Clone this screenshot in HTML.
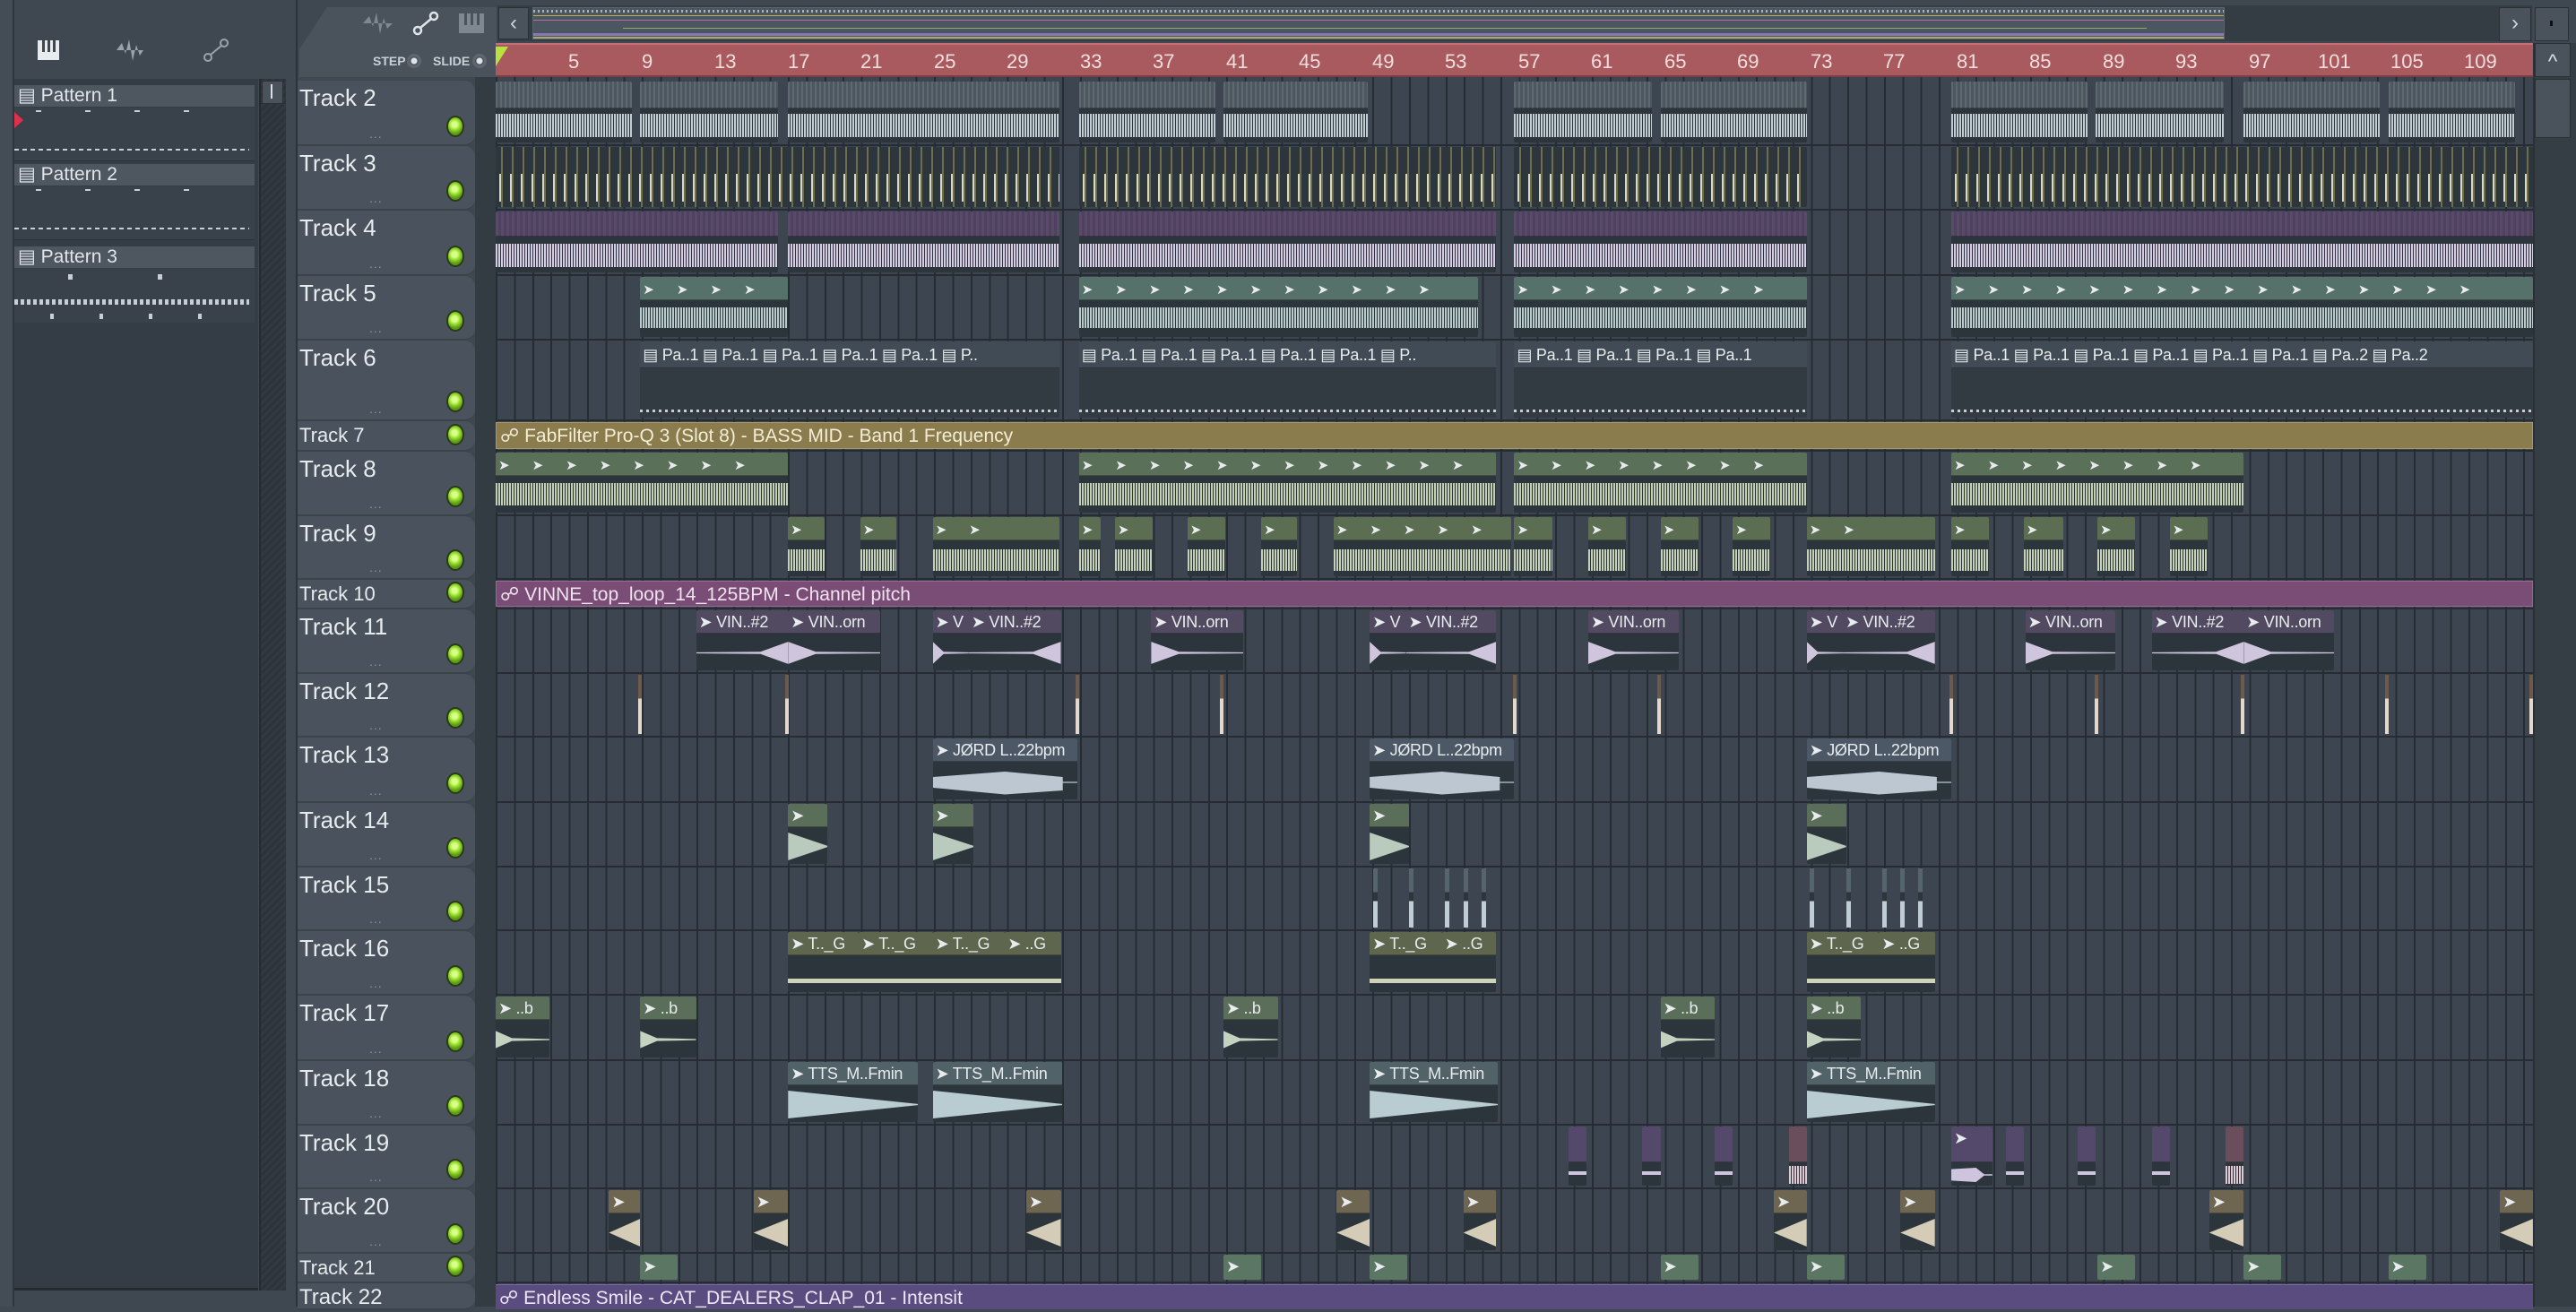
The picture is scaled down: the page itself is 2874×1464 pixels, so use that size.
<!DOCTYPE html>
<html><head><meta charset="utf-8">
<style>
*{box-sizing:border-box;margin:0;padding:0}
body{width:2874px;height:1458px;overflow:hidden;background:#3f4850;font-family:"Liberation Sans Narrow","Liberation Sans",sans-serif;position:relative;color:#dfe5ea}
.abs{position:absolute}
#grid{position:absolute;left:553px;top:86px;width:2273px;height:1372px;background-color:#3d4650;background-image:repeating-linear-gradient(90deg,#252c33 0 2px,transparent 2px 20.38px)}
.r{position:absolute;left:553px;width:2273px;border-bottom:2px solid #252c33}
.th{position:absolute;left:332px;width:198px;background:#4a535d;border-radius:0 12px 12px 0;border-bottom:2px solid #3a424a}
.th b{position:absolute;left:2px;top:4px;font-weight:normal;font-size:26px;color:#e6ebee}
.th i{position:absolute;left:80px;bottom:4px;font-style:normal;font-size:14px;color:#8a939c;letter-spacing:1px}
.th s{position:absolute;right:12px;bottom:8px;width:20px;height:24px;border-radius:50%;background:radial-gradient(circle at 45% 40%,#d8ff8a 0 3px,#96dc2c 6px,#5d9a16 10px);border:2px solid #2a3a1a}
.c{position:absolute;top:1px;bottom:2px;left:calc((var(--a) - 302)*1.833px);width:calc((var(--b) - var(--a))*1.833px);background:#2d353c;overflow:hidden;border-radius:2px}
.h{height:26px;background:var(--hc);font-size:18px;letter-spacing:-0.3px;line-height:26px;white-space:nowrap;padding-left:3px;color:#e8ecee;overflow:hidden;border-bottom:1px solid rgba(0,0,0,.3)}
.w{position:absolute;left:0;right:0;top:36px;bottom:6px;background:repeating-linear-gradient(90deg,var(--wc) 0 2px,transparent 2px 3px)}
.ws{position:absolute;left:0;right:0;top:32px;bottom:4px;background:var(--wc)}
.ar{font-size:15px;letter-spacing:25px}
.auto{position:absolute;left:0;right:0;top:1px;bottom:1px;font-size:21px;line-height:30px;padding-left:4px;white-space:nowrap}
.tk{position:absolute;top:1px;bottom:2px;width:4px;left:calc((var(--a) - 302)*1.833px)}
.rn{position:absolute;top:56px;font-size:22px;color:#f3dede}
</style></head><body>

<div class="abs" style="left:0;top:0;width:16px;height:1458px;background:#444d56;border-right:2px solid #2f363d"></div>
<div class="abs" style="left:18px;top:0;width:312px;height:88px;background:#3f4850"></div>
<svg class="abs" style="left:36px;top:42px" width="240" height="30" viewBox="0 0 240 30">
 <rect x="6" y="3" width="24" height="22" fill="#e8ecef"/><rect x="11" y="3" width="3" height="13" fill="#3f4850"/><rect x="17" y="3" width="3" height="13" fill="#3f4850"/><rect x="23" y="3" width="3" height="13" fill="#3f4850"/>
 <path d="M94 14 L100 6 L104 18 L108 2 L112 26 L116 8 L120 20 L124 14 Z" fill="#9aa3ab"/>
 <circle cx="196" cy="22" r="4" fill="none" stroke="#9aa3ab" stroke-width="2"/><circle cx="214" cy="6" r="4" fill="none" stroke="#9aa3ab" stroke-width="2"/><line x1="199" y1="19" x2="211" y2="9" stroke="#9aa3ab" stroke-width="2"/>
</svg>
<div class="abs" style="left:16px;top:88px;width:272px;height:1352px;background:#343d46;border-bottom:3px solid #252b31"></div>
<div class="abs" style="left:289px;top:88px;width:30px;height:1352px;background:repeating-linear-gradient(135deg,#2c333a 0 3px,#323a41 3px 6px);border-left:2px solid #252b31"></div>
<div class="abs" style="left:292px;top:90px;width:24px;height:26px;background:#4a535c;border:1px solid #2a3036"></div>
<div class="abs" style="left:302px;top:94px;width:2px;height:16px;background:#dde"></div>

<div class="abs" style="left:16px;top:95px;width:268px;height:24px;background:#4e5760;font-size:21px;line-height:24px;padding-left:4px">▤ Pattern 1</div>
<div class="abs" style="left:16px;top:120px;width:268px;height:60px;background:#39424b;border-bottom:1px solid #2b3238">
 <div class="abs" style="left:24px;top:3px;width:220px;height:2px;background:repeating-linear-gradient(90deg,#c8ced3 0 6px,transparent 6px 55px)"></div>
 <div class="abs" style="left:0;top:46px;width:262px;height:2px;background:repeating-linear-gradient(90deg,#c8ced3 0 5px,transparent 5px 9px)"></div>
</div>
<div class="abs" style="left:16px;top:125px;width:0;height:0;border-top:9px solid transparent;border-bottom:9px solid transparent;border-left:10px solid #e0304a"></div>
<div class="abs" style="left:16px;top:183px;width:268px;height:24px;background:#4e5760;font-size:21px;line-height:24px;padding-left:4px">▤ Pattern 2</div>
<div class="abs" style="left:16px;top:208px;width:268px;height:60px;background:#39424b;border-bottom:1px solid #2b3238">
 <div class="abs" style="left:24px;top:3px;width:220px;height:2px;background:repeating-linear-gradient(90deg,#c8ced3 0 6px,transparent 6px 55px)"></div>
 <div class="abs" style="left:0;top:46px;width:262px;height:2px;background:repeating-linear-gradient(90deg,#c8ced3 0 5px,transparent 5px 9px)"></div>
</div>
<div class="abs" style="left:16px;top:275px;width:268px;height:24px;background:#4e5760;font-size:21px;line-height:24px;padding-left:4px">▤ Pattern 3</div>
<div class="abs" style="left:16px;top:300px;width:268px;height:60px;background:#39424b">
 <div class="abs" style="left:60px;top:6px;width:200px;height:6px;background:repeating-linear-gradient(90deg,#c8ced3 0 5px,transparent 5px 100px)"></div>
 <div class="abs" style="left:0;top:34px;width:262px;height:6px;background:repeating-linear-gradient(90deg,#c8ced3 0 4px,transparent 4px 7px)"></div>
 <div class="abs" style="left:40px;top:50px;width:220px;height:6px;background:repeating-linear-gradient(90deg,#c8ced3 0 4px,transparent 4px 55px)"></div>
</div>

<div class="abs" style="left:330px;top:0;width:2px;height:1458px;background:#2b3238"></div>
<div class="abs" style="left:334px;top:8px;width:220px;height:78px;background:#4a535c;clip-path:polygon(14% 0,100% 0,100% 100%,0 100%,0 60%)"></div>
<svg class="abs" style="left:400px;top:12px" width="150" height="30" viewBox="0 0 150 30">
 <path d="M5 14 L12 6 L16 18 L20 2 L24 26 L28 8 L32 20 L38 14 Z" fill="#7f8890"/>
 <circle cx="66" cy="22" r="4" fill="none" stroke="#dfe4e8" stroke-width="2.5"/><circle cx="84" cy="6" r="4" fill="none" stroke="#dfe4e8" stroke-width="2.5"/><line x1="69" y1="19" x2="81" y2="9" stroke="#dfe4e8" stroke-width="2.5"/>
 <rect x="112" y="3" width="28" height="22" fill="#7f8890"/><rect x="118" y="3" width="3" height="13" fill="#4a535c"/><rect x="125" y="3" width="3" height="13" fill="#4a535c"/><rect x="132" y="3" width="3" height="13" fill="#4a535c"/>
</svg>
<div class="abs" style="left:416px;top:60px;font-size:14px;color:#c8d0d6;font-family:'Liberation Sans',sans-serif;font-weight:bold">STEP</div>
<div class="abs" style="left:454px;top:60px;width:16px;height:16px;border-radius:50%;border:3px solid #5e676f;background:radial-gradient(circle,#dfe4e8 0 3px,#4a535c 4px)"></div>
<div class="abs" style="left:483px;top:60px;font-size:14px;color:#c8d0d6;font-family:'Liberation Sans',sans-serif;font-weight:bold">SLIDE</div>
<div class="abs" style="left:527px;top:60px;width:16px;height:16px;border-radius:50%;border:3px solid #5e676f;background:radial-gradient(circle,#dfe4e8 0 3px,#4a535c 4px)"></div>

<div class="abs" style="left:555px;top:6px;width:2270px;height:40px;background:#343c44"></div>
<div class="abs" style="left:556px;top:8px;width:34px;height:36px;background:#4a535c;border:1px solid #2a3036;font-size:24px;text-align:center;line-height:34px;color:#cfd5da">‹</div>
<div class="abs" style="left:594px;top:8px;width:1888px;height:36px;background:#4b5660;border:1px solid #5a646d">
 <div class="abs" style="left:0;top:2px;width:100%;height:3px;background:repeating-linear-gradient(90deg,#aab3ba 0 2px,transparent 2px 5px)"></div>
 <div class="abs" style="left:0;top:8px;width:100%;height:1px;background:#b8b060"></div>
 <div class="abs" style="left:0;top:13px;width:100%;height:1px;background:#b070a0"></div>
 <div class="abs" style="left:100px;top:22px;width:1700px;height:1px;background:#9aa870"></div>
 <div class="abs" style="left:0;top:28px;width:100%;height:3px;background:#8a78b0"></div>
 <div class="abs" style="left:0;top:32px;width:100%;height:2px;background:#a8a870"></div>
</div>
<div class="abs" style="left:2788px;top:8px;width:36px;height:38px;background:#4a535c;border:1px solid #2a3036;font-size:24px;text-align:center;line-height:34px;color:#cfd5da">›</div>
<div class="abs" style="left:2828px;top:8px;width:38px;height:38px;background:#4a535c;border:1px solid #2a3036"></div>
<div class="abs" style="left:2845px;top:23px;width:3px;height:6px;background:#111"></div>

<div class="abs" style="left:553px;top:48px;width:2273px;height:38px;background:#a85a5f;border-top:2px solid #c47076;border-bottom:2px solid #7c3e44"></div>
<div class="abs" style="left:553px;top:52px;width:0;height:0;border-left:14px solid #b7e040;border-bottom:22px solid transparent"></div>
<div class="rn" style="left:634px">5</div>
<div class="rn" style="left:716px">9</div>
<div class="rn" style="left:797px">13</div>
<div class="rn" style="left:879px">17</div>
<div class="rn" style="left:960px">21</div>
<div class="rn" style="left:1042px">25</div>
<div class="rn" style="left:1123px">29</div>
<div class="rn" style="left:1205px">33</div>
<div class="rn" style="left:1286px">37</div>
<div class="rn" style="left:1368px">41</div>
<div class="rn" style="left:1449px">45</div>
<div class="rn" style="left:1531px">49</div>
<div class="rn" style="left:1612px">53</div>
<div class="rn" style="left:1694px">57</div>
<div class="rn" style="left:1775px">61</div>
<div class="rn" style="left:1857px">65</div>
<div class="rn" style="left:1938px">69</div>
<div class="rn" style="left:2020px">73</div>
<div class="rn" style="left:2101px">77</div>
<div class="rn" style="left:2183px">81</div>
<div class="rn" style="left:2264px">85</div>
<div class="rn" style="left:2346px">89</div>
<div class="rn" style="left:2427px">93</div>
<div class="rn" style="left:2509px">97</div>
<div class="rn" style="left:2586px">101</div>
<div class="rn" style="left:2667px">105</div>
<div class="rn" style="left:2749px">109</div>

<div class="abs" style="left:2826px;top:48px;width:48px;height:1410px;background:#353d45;border-left:2px solid #2a3036"></div>
<div class="abs" style="left:2828px;top:48px;width:40px;height:38px;background:#4a535c;border:1px solid #2a3036;font-size:22px;text-align:center;line-height:40px;color:#dfe4e8">^</div>
<div class="abs" style="left:2828px;top:88px;width:40px;height:66px;background:#4a535c;border:1px solid #2a3036"></div>

<div class="abs" style="left:530px;top:86px;width:23px;height:1372px;background:#333b43"></div>

<div id="grid"></div>

<div class="th" style="top:90px;height:73px"><b>Track 2</b><i>...</i><s></s></div>
<div class="th" style="top:163px;height:72px"><b>Track 3</b><i>...</i><s></s></div>
<div class="th" style="top:235px;height:73px"><b>Track 4</b><i>...</i><s></s></div>
<div class="th" style="top:308px;height:72px"><b>Track 5</b><i>...</i><s></s></div>
<div class="th" style="top:380px;height:90px"><b>Track 6</b><i>...</i><s></s></div>
<div class="th" style="top:470px;height:34px"><b style="font-size:22px;top:3px">Track 7</b><s style="bottom:5px"></s></div>
<div class="th" style="top:504px;height:72px"><b>Track 8</b><i>...</i><s></s></div>
<div class="th" style="top:576px;height:71px"><b>Track 9</b><i>...</i><s></s></div>
<div class="th" style="top:647px;height:33px"><b style="font-size:22px;top:3px">Track 10</b><s style="bottom:5px"></s></div>
<div class="th" style="top:680px;height:72px"><b>Track 11</b><i>...</i><s></s></div>
<div class="th" style="top:752px;height:71px"><b>Track 12</b><i>...</i><s></s></div>
<div class="th" style="top:823px;height:73px"><b>Track 13</b><i>...</i><s></s></div>
<div class="th" style="top:896px;height:72px"><b>Track 14</b><i>...</i><s></s></div>
<div class="th" style="top:968px;height:71px"><b>Track 15</b><i>...</i><s></s></div>
<div class="th" style="top:1039px;height:72px"><b>Track 16</b><i>...</i><s></s></div>
<div class="th" style="top:1111px;height:73px"><b>Track 17</b><i>...</i><s></s></div>
<div class="th" style="top:1184px;height:72px"><b>Track 18</b><i>...</i><s></s></div>
<div class="th" style="top:1256px;height:71px"><b>Track 19</b><i>...</i><s></s></div>
<div class="th" style="top:1327px;height:72px"><b>Track 20</b><i>...</i><s></s></div>
<div class="th" style="top:1399px;height:33px"><b style="font-size:22px;top:3px">Track 21</b><s style="bottom:5px"></s></div>
<div class="th" style="top:1432px;height:30px"><b style="font-size:24px;top:2px">Track 22</b></div>

<div class="r" style="top:90px;height:73px;--hc:#4f5b63;--wc:#c2ccd3">
<div class="c" style="--a:302;--b:385"><div class="h" style="height:30px;background:repeating-linear-gradient(90deg,#5d6870 0 2px,#4c575f 2px 5px)"></div><div class="w"></div></div>
<div class="c" style="--a:390;--b:474"><div class="h" style="height:30px;background:repeating-linear-gradient(90deg,#5d6870 0 2px,#4c575f 2px 5px)"></div><div class="w"></div></div>
<div class="c" style="--a:480;--b:645"><div class="h" style="height:30px;background:repeating-linear-gradient(90deg,#5d6870 0 2px,#4c575f 2px 5px)"></div><div class="w"></div></div>
<div class="c" style="--a:657;--b:740"><div class="h" style="height:30px;background:repeating-linear-gradient(90deg,#5d6870 0 2px,#4c575f 2px 5px)"></div><div class="w"></div></div>
<div class="c" style="--a:745;--b:833"><div class="h" style="height:30px;background:repeating-linear-gradient(90deg,#5d6870 0 2px,#4c575f 2px 5px)"></div><div class="w"></div></div>
<div class="c" style="--a:922;--b:1006"><div class="h" style="height:30px;background:repeating-linear-gradient(90deg,#5d6870 0 2px,#4c575f 2px 5px)"></div><div class="w"></div></div>
<div class="c" style="--a:1011;--b:1100"><div class="h" style="height:30px;background:repeating-linear-gradient(90deg,#5d6870 0 2px,#4c575f 2px 5px)"></div><div class="w"></div></div>
<div class="c" style="--a:1188;--b:1271"><div class="h" style="height:30px;background:repeating-linear-gradient(90deg,#5d6870 0 2px,#4c575f 2px 5px)"></div><div class="w"></div></div>
<div class="c" style="--a:1276;--b:1354"><div class="h" style="height:30px;background:repeating-linear-gradient(90deg,#5d6870 0 2px,#4c575f 2px 5px)"></div><div class="w"></div></div>
<div class="c" style="--a:1366;--b:1449"><div class="h" style="height:30px;background:repeating-linear-gradient(90deg,#5d6870 0 2px,#4c575f 2px 5px)"></div><div class="w"></div></div>
<div class="c" style="--a:1454;--b:1531"><div class="h" style="height:30px;background:repeating-linear-gradient(90deg,#5d6870 0 2px,#4c575f 2px 5px)"></div><div class="w"></div></div>
</div>
<div class="r" style="top:163px;height:72px">
<div class="c" style="--a:302;--b:645;background:repeating-linear-gradient(90deg,#2e363d 0 6px,#6e6e4c 6px 8px,#2e363d 8px 12px)"><div class="w" style="top:30px;background:repeating-linear-gradient(90deg,transparent 0 4px,#d8dac0 4px 6px,transparent 6px 12px)"></div></div>
<div class="c" style="--a:657;--b:911;background:repeating-linear-gradient(90deg,#2e363d 0 6px,#6e6e4c 6px 8px,#2e363d 8px 12px)"><div class="w" style="top:30px;background:repeating-linear-gradient(90deg,transparent 0 4px,#d8dac0 4px 6px,transparent 6px 12px)"></div></div>
<div class="c" style="--a:922;--b:1100;background:repeating-linear-gradient(90deg,#2e363d 0 6px,#6e6e4c 6px 8px,#2e363d 8px 12px)"><div class="w" style="top:30px;background:repeating-linear-gradient(90deg,transparent 0 4px,#d8dac0 4px 6px,transparent 6px 12px)"></div></div>
<div class="c" style="--a:1188;--b:1542;background:repeating-linear-gradient(90deg,#2e363d 0 6px,#6e6e4c 6px 8px,#2e363d 8px 12px)"><div class="w" style="top:30px;background:repeating-linear-gradient(90deg,transparent 0 4px,#d8dac0 4px 6px,transparent 6px 12px)"></div></div>
</div>
<div class="r" style="top:235px;height:73px;--wc:#d6cde4">
<div class="c" style="--a:302;--b:474"><div class="h" style="height:28px;background:repeating-linear-gradient(90deg,#5a4a68 0 3px,#4e4260 3px 6px)"></div><div class="w"></div></div>
<div class="c" style="--a:480;--b:645"><div class="h" style="height:28px;background:repeating-linear-gradient(90deg,#5a4a68 0 3px,#4e4260 3px 6px)"></div><div class="w"></div></div>
<div class="c" style="--a:657;--b:911"><div class="h" style="height:28px;background:repeating-linear-gradient(90deg,#5a4a68 0 3px,#4e4260 3px 6px)"></div><div class="w"></div></div>
<div class="c" style="--a:922;--b:1100"><div class="h" style="height:28px;background:repeating-linear-gradient(90deg,#5a4a68 0 3px,#4e4260 3px 6px)"></div><div class="w"></div></div>
<div class="c" style="--a:1188;--b:1542"><div class="h" style="height:28px;background:repeating-linear-gradient(90deg,#5a4a68 0 3px,#4e4260 3px 6px)"></div><div class="w"></div></div>
</div>
<div class="r" style="top:308px;height:72px;--hc:#56706a;--wc:#b9cacb">
<div class="c" style="--a:390;--b:480"><div class="h"><span class="ar">➤➤➤➤</span></div><div class="w" style="top:34px;bottom:10px"></div></div>
<div class="c" style="--a:657;--b:900"><div class="h"><span class="ar">➤➤➤➤➤➤➤➤➤➤➤</span></div><div class="w" style="top:34px;bottom:10px"></div></div>
<div class="c" style="--a:922;--b:1100"><div class="h"><span class="ar">➤➤➤➤➤➤➤➤</span></div><div class="w" style="top:34px;bottom:10px"></div></div>
<div class="c" style="--a:1188;--b:1542"><div class="h"><span class="ar">➤➤➤➤➤➤➤➤➤➤➤➤➤➤➤➤</span></div><div class="w" style="top:34px;bottom:10px"></div></div>
</div>
<div class="r" style="top:380px;height:90px;--hc:#414b55">
<div class="c" style="--a:390;--b:645;background:#323a42"><div class="h" style="height:30px;line-height:30px">▤ Pa..1 ▤ Pa..1 ▤ Pa..1 ▤ Pa..1 ▤ Pa..1 ▤ P..</div><div class="abs" style="left:0;right:0;bottom:6px;height:3px;background:repeating-linear-gradient(90deg,#c8ced3 0 3px,transparent 3px 7px)"></div></div>
<div class="c" style="--a:657;--b:911;background:#323a42"><div class="h" style="height:30px;line-height:30px">▤ Pa..1 ▤ Pa..1 ▤ Pa..1 ▤ Pa..1 ▤ Pa..1 ▤ P..</div><div class="abs" style="left:0;right:0;bottom:6px;height:3px;background:repeating-linear-gradient(90deg,#c8ced3 0 3px,transparent 3px 7px)"></div></div>
<div class="c" style="--a:922;--b:1100;background:#323a42"><div class="h" style="height:30px;line-height:30px">▤ Pa..1 ▤ Pa..1 ▤ Pa..1 ▤ Pa..1</div><div class="abs" style="left:0;right:0;bottom:6px;height:3px;background:repeating-linear-gradient(90deg,#c8ced3 0 3px,transparent 3px 7px)"></div></div>
<div class="c" style="--a:1188;--b:1542;background:#323a42"><div class="h" style="height:30px;line-height:30px">▤ Pa..1 ▤ Pa..1 ▤ Pa..1 ▤ Pa..1 ▤ Pa..1 ▤ Pa..1 ▤ Pa..2 ▤ Pa..2</div><div class="abs" style="left:0;right:0;bottom:6px;height:3px;background:repeating-linear-gradient(90deg,#c8ced3 0 3px,transparent 3px 7px)"></div></div>
</div>
<div class="r" style="top:470px;height:34px"><div class="auto" style="background:#8a7c4c;border:1px solid #a89a66;color:#f3ecd6">☍ FabFilter Pro-Q 3 (Slot 8) - BASS MID - Band 1 Frequency</div></div>
<div class="r" style="top:504px;height:72px;--hc:#5b7058;--wc:#c2cfb2">
<div class="c" style="--a:302;--b:480"><div class="h"><span class="ar">➤➤➤➤➤➤➤➤</span></div><div class="w" style="top:34px;bottom:8px"></div></div>
<div class="c" style="--a:657;--b:911"><div class="h"><span class="ar">➤➤➤➤➤➤➤➤➤➤➤➤</span></div><div class="w" style="top:34px;bottom:8px"></div></div>
<div class="c" style="--a:922;--b:1100"><div class="h"><span class="ar">➤➤➤➤➤➤➤➤</span></div><div class="w" style="top:34px;bottom:8px"></div></div>
<div class="c" style="--a:1188;--b:1366"><div class="h"><span class="ar">➤➤➤➤➤➤➤➤</span></div><div class="w" style="top:34px;bottom:8px"></div></div>
</div>
<div class="r" style="top:576px;height:71px;--hc:#5b6e52;--wc:#c6d2b8">
<div class="c" style="--a:480;--b:502"><div class="h"><span class="ar">➤</span></div><div class="w"></div></div>
<div class="c" style="--a:524;--b:546"><div class="h"><span class="ar">➤</span></div><div class="w"></div></div>
<div class="c" style="--a:568;--b:645"><div class="h"><span class="ar">➤➤</span></div><div class="w"></div></div>
<div class="c" style="--a:657;--b:670"><div class="h"><span class="ar">➤</span></div><div class="w"></div></div>
<div class="c" style="--a:679;--b:702"><div class="h"><span class="ar">➤</span></div><div class="w"></div></div>
<div class="c" style="--a:723;--b:746"><div class="h"><span class="ar">➤</span></div><div class="w"></div></div>
<div class="c" style="--a:768;--b:790"><div class="h"><span class="ar">➤</span></div><div class="w"></div></div>
<div class="c" style="--a:812;--b:920"><div class="h"><span class="ar">➤➤➤➤➤</span></div><div class="w"></div></div>
<div class="c" style="--a:922;--b:945"><div class="h"><span class="ar">➤</span></div><div class="w"></div></div>
<div class="c" style="--a:967;--b:990"><div class="h"><span class="ar">➤</span></div><div class="w"></div></div>
<div class="c" style="--a:1011;--b:1034"><div class="h"><span class="ar">➤</span></div><div class="w"></div></div>
<div class="c" style="--a:1055;--b:1078"><div class="h"><span class="ar">➤</span></div><div class="w"></div></div>
<div class="c" style="--a:1100;--b:1178"><div class="h"><span class="ar">➤➤</span></div><div class="w"></div></div>
<div class="c" style="--a:1188;--b:1211"><div class="h"><span class="ar">➤</span></div><div class="w"></div></div>
<div class="c" style="--a:1232;--b:1256"><div class="h"><span class="ar">➤</span></div><div class="w"></div></div>
<div class="c" style="--a:1277;--b:1300"><div class="h"><span class="ar">➤</span></div><div class="w"></div></div>
<div class="c" style="--a:1321;--b:1344"><div class="h"><span class="ar">➤</span></div><div class="w"></div></div>
</div>
<div class="r" style="top:647px;height:33px"><div class="auto" style="background:#7a4d76;border:1px solid #9a6a94;color:#f0e2ee">☍ VINNE_top_loop_14_125BPM - Channel pitch</div></div>
<div class="r" style="top:680px;height:72px;--hc:#514a60;--wc:#cfc6de">
<div class="c" style="--a:424;--b:480"><div class="h">➤ VIN..#2</div><div class="ws" style="clip-path:polygon(0 48%,70% 46%,100% 10%,100% 90%,70% 54%,0 52%)"></div></div>
<div class="c" style="--a:480;--b:536"><div class="h">➤ VIN..orn</div><div class="ws" style="clip-path:polygon(0 10%,30% 46%,100% 48%,100% 52%,30% 54%,0 90%)"></div></div>
<div class="c" style="--a:568;--b:590"><div class="h">➤ V</div><div class="ws" style="clip-path:polygon(0 10%,30% 46%,100% 48%,100% 52%,30% 54%,0 90%)"></div></div>
<div class="c" style="--a:590;--b:646"><div class="h">➤ VIN..#2</div><div class="ws" style="clip-path:polygon(0 48%,70% 46%,100% 10%,100% 90%,70% 54%,0 52%)"></div></div>
<div class="c" style="--a:701;--b:757"><div class="h">➤ VIN..orn</div><div class="ws" style="clip-path:polygon(0 10%,30% 46%,100% 48%,100% 52%,30% 54%,0 90%)"></div></div>
<div class="c" style="--a:834;--b:856"><div class="h">➤ V</div><div class="ws" style="clip-path:polygon(0 10%,30% 46%,100% 48%,100% 52%,30% 54%,0 90%)"></div></div>
<div class="c" style="--a:856;--b:911"><div class="h">➤ VIN..#2</div><div class="ws" style="clip-path:polygon(0 48%,70% 46%,100% 10%,100% 90%,70% 54%,0 52%)"></div></div>
<div class="c" style="--a:967;--b:1022"><div class="h">➤ VIN..orn</div><div class="ws" style="clip-path:polygon(0 10%,30% 46%,100% 48%,100% 52%,30% 54%,0 90%)"></div></div>
<div class="c" style="--a:1100;--b:1122"><div class="h">➤ V</div><div class="ws" style="clip-path:polygon(0 10%,30% 46%,100% 48%,100% 52%,30% 54%,0 90%)"></div></div>
<div class="c" style="--a:1122;--b:1178"><div class="h">➤ VIN..#2</div><div class="ws" style="clip-path:polygon(0 48%,70% 46%,100% 10%,100% 90%,70% 54%,0 52%)"></div></div>
<div class="c" style="--a:1233;--b:1288"><div class="h">➤ VIN..orn</div><div class="ws" style="clip-path:polygon(0 10%,30% 46%,100% 48%,100% 52%,30% 54%,0 90%)"></div></div>
<div class="c" style="--a:1310;--b:1366"><div class="h">➤ VIN..#2</div><div class="ws" style="clip-path:polygon(0 48%,70% 46%,100% 10%,100% 90%,70% 54%,0 52%)"></div></div>
<div class="c" style="--a:1366;--b:1421"><div class="h">➤ VIN..orn</div><div class="ws" style="clip-path:polygon(0 10%,30% 46%,100% 48%,100% 52%,30% 54%,0 90%)"></div></div>
</div>
<div class="r" style="top:752px;height:71px">
<div class="tk" style="--a:389;background:linear-gradient(#6e5a4a 0 40%,#e4d8cc 40%)"></div>
<div class="tk" style="--a:478;background:linear-gradient(#6e5a4a 0 40%,#e4d8cc 40%)"></div>
<div class="tk" style="--a:655;background:linear-gradient(#6e5a4a 0 40%,#e4d8cc 40%)"></div>
<div class="tk" style="--a:743;background:linear-gradient(#6e5a4a 0 40%,#e4d8cc 40%)"></div>
<div class="tk" style="--a:921;background:linear-gradient(#6e5a4a 0 40%,#e4d8cc 40%)"></div>
<div class="tk" style="--a:1009;background:linear-gradient(#6e5a4a 0 40%,#e4d8cc 40%)"></div>
<div class="tk" style="--a:1187;background:linear-gradient(#6e5a4a 0 40%,#e4d8cc 40%)"></div>
<div class="tk" style="--a:1275;background:linear-gradient(#6e5a4a 0 40%,#e4d8cc 40%)"></div>
<div class="tk" style="--a:1364;background:linear-gradient(#6e5a4a 0 40%,#e4d8cc 40%)"></div>
<div class="tk" style="--a:1452;background:linear-gradient(#6e5a4a 0 40%,#e4d8cc 40%)"></div>
<div class="tk" style="--a:1540;background:linear-gradient(#6e5a4a 0 40%,#e4d8cc 40%)"></div>
</div>
<div class="r" style="top:823px;height:73px;--hc:#4c5865;--wc:#bcc7d2">
<div class="c" style="--a:568;--b:656"><div class="h">➤ JØRD L..22bpm</div><div class="ws" style="top:34px;clip-path:polygon(0 30%,50% 10%,90% 30%,90% 48%,100% 48%,100% 52%,90% 52%,90% 80%,50% 95%,0 70%)"></div></div>
<div class="c" style="--a:834;--b:922"><div class="h">➤ JØRD L..22bpm</div><div class="ws" style="top:34px;clip-path:polygon(0 30%,50% 10%,90% 30%,90% 48%,100% 48%,100% 52%,90% 52%,90% 80%,50% 95%,0 70%)"></div></div>
<div class="c" style="--a:1100;--b:1188"><div class="h">➤ JØRD L..22bpm</div><div class="ws" style="top:34px;clip-path:polygon(0 30%,50% 10%,90% 30%,90% 48%,100% 48%,100% 52%,90% 52%,90% 80%,50% 95%,0 70%)"></div></div>
</div>
<div class="r" style="top:896px;height:72px;--hc:#5a6e5a;--wc:#b8cbbd">
<div class="c" style="--a:480;--b:504"><div class="h">➤</div><div class="ws" style="clip-path:polygon(0 0,100% 48%,100% 52%,0 100%)"></div></div>
<div class="c" style="--a:568;--b:593"><div class="h">➤</div><div class="ws" style="clip-path:polygon(0 0,100% 48%,100% 52%,0 100%)"></div></div>
<div class="c" style="--a:834;--b:858"><div class="h">➤</div><div class="ws" style="clip-path:polygon(0 0,100% 48%,100% 52%,0 100%)"></div></div>
<div class="c" style="--a:1100;--b:1124"><div class="h">➤</div><div class="ws" style="clip-path:polygon(0 0,100% 48%,100% 52%,0 100%)"></div></div>
</div>
<div class="r" style="top:968px;height:71px">
<div class="tk" style="--a:836;width:5px;background:linear-gradient(#56646e 0 40%,#2d353c 40% 55%,#c0ccd4 55%)"></div>
<div class="tk" style="--a:858;width:5px;background:linear-gradient(#56646e 0 40%,#2d353c 40% 55%,#c0ccd4 55%)"></div>
<div class="tk" style="--a:880;width:5px;background:linear-gradient(#56646e 0 40%,#2d353c 40% 55%,#c0ccd4 55%)"></div>
<div class="tk" style="--a:891;width:5px;background:linear-gradient(#56646e 0 40%,#2d353c 40% 55%,#c0ccd4 55%)"></div>
<div class="tk" style="--a:902;width:5px;background:linear-gradient(#56646e 0 40%,#2d353c 40% 55%,#c0ccd4 55%)"></div>
<div class="tk" style="--a:1102;width:5px;background:linear-gradient(#56646e 0 40%,#2d353c 40% 55%,#c0ccd4 55%)"></div>
<div class="tk" style="--a:1124;width:5px;background:linear-gradient(#56646e 0 40%,#2d353c 40% 55%,#c0ccd4 55%)"></div>
<div class="tk" style="--a:1146;width:5px;background:linear-gradient(#56646e 0 40%,#2d353c 40% 55%,#c0ccd4 55%)"></div>
<div class="tk" style="--a:1157;width:5px;background:linear-gradient(#56646e 0 40%,#2d353c 40% 55%,#c0ccd4 55%)"></div>
<div class="tk" style="--a:1168;width:5px;background:linear-gradient(#56646e 0 40%,#2d353c 40% 55%,#c0ccd4 55%)"></div>
</div>
<div class="r" style="top:1039px;height:72px;--hc:#5e674e;--wc:#cdd2b8">
<div class="c" style="--a:480;--b:523"><div class="h">➤ T.._G</div><div class="ws" style="top:52px;bottom:10px"></div></div>
<div class="c" style="--a:523;--b:568"><div class="h">➤ T.._G</div><div class="ws" style="top:52px;bottom:10px"></div></div>
<div class="c" style="--a:568;--b:612"><div class="h">➤ T.._G</div><div class="ws" style="top:52px;bottom:10px"></div></div>
<div class="c" style="--a:612;--b:646"><div class="h">➤ ..G</div><div class="ws" style="top:52px;bottom:10px"></div></div>
<div class="c" style="--a:834;--b:878"><div class="h">➤ T.._G</div><div class="ws" style="top:52px;bottom:10px"></div></div>
<div class="c" style="--a:878;--b:911"><div class="h">➤ ..G</div><div class="ws" style="top:52px;bottom:10px"></div></div>
<div class="c" style="--a:1100;--b:1144"><div class="h">➤ T.._G</div><div class="ws" style="top:52px;bottom:10px"></div></div>
<div class="c" style="--a:1144;--b:1178"><div class="h">➤ ..G</div><div class="ws" style="top:52px;bottom:10px"></div></div>
</div>
<div class="r" style="top:1111px;height:73px;--hc:#5a6e5a;--wc:#c4d2c0">
<div class="c" style="--a:302;--b:335"><div class="h">➤ ..b</div><div class="ws" style="clip-path:polygon(0 20%,30% 45%,100% 48%,100% 52%,30% 55%,0 80%)"></div></div>
<div class="c" style="--a:390;--b:424"><div class="h">➤ ..b</div><div class="ws" style="clip-path:polygon(0 20%,30% 45%,100% 48%,100% 52%,30% 55%,0 80%)"></div></div>
<div class="c" style="--a:745;--b:778"><div class="h">➤ ..b</div><div class="ws" style="clip-path:polygon(0 20%,30% 45%,100% 48%,100% 52%,30% 55%,0 80%)"></div></div>
<div class="c" style="--a:1011;--b:1044"><div class="h">➤ ..b</div><div class="ws" style="clip-path:polygon(0 20%,30% 45%,100% 48%,100% 52%,30% 55%,0 80%)"></div></div>
<div class="c" style="--a:1100;--b:1133"><div class="h">➤ ..b</div><div class="ws" style="clip-path:polygon(0 20%,30% 45%,100% 48%,100% 52%,30% 55%,0 80%)"></div></div>
</div>
<div class="r" style="top:1184px;height:72px;--hc:#516268;--wc:#b8ccd2">
<div class="c" style="--a:480;--b:559"><div class="h">➤ TTS_M..Fmin</div><div class="ws" style="clip-path:polygon(0 0,100% 48%,100% 52%,0 100%)"></div></div>
<div class="c" style="--a:568;--b:647"><div class="h">➤ TTS_M..Fmin</div><div class="ws" style="clip-path:polygon(0 0,100% 48%,100% 52%,0 100%)"></div></div>
<div class="c" style="--a:834;--b:912"><div class="h">➤ TTS_M..Fmin</div><div class="ws" style="clip-path:polygon(0 0,100% 48%,100% 52%,0 100%)"></div></div>
<div class="c" style="--a:1100;--b:1178"><div class="h">➤ TTS_M..Fmin</div><div class="ws" style="clip-path:polygon(0 0,100% 48%,100% 52%,0 100%)"></div></div>
</div>
<div class="r" style="top:1256px;height:71px;--hc:#54496a;--wc:#cfc4de">
<div class="c" style="--a:955;--b:966"><div class="h" style="height:40px"></div><div class="ws" style="top:50px;bottom:12px"></div></div>
<div class="c" style="--a:1000;--b:1011"><div class="h" style="height:40px"></div><div class="ws" style="top:50px;bottom:12px"></div></div>
<div class="c" style="--a:1044;--b:1055"><div class="h" style="height:40px"></div><div class="ws" style="top:50px;bottom:12px"></div></div>
<div class="c" style="--a:1089;--b:1100"><div class="h" style="height:40px;background:#6a4e5c"></div><div class="w" style="top:44px;bottom:2px;--wc:#e0c8d4"></div></div>
<div class="c" style="--a:1188;--b:1213"><div class="h" style="height:40px">➤</div><div class="ws" style="top:46px;bottom:4px;clip-path:polygon(0 10%,60% 0,80% 45%,100% 45%,100% 55%,80% 55%,60% 100%,0 90%)"></div></div>
<div class="c" style="--a:1221;--b:1232"><div class="h" style="height:40px"></div><div class="ws" style="top:50px;bottom:12px"></div></div>
<div class="c" style="--a:1265;--b:1276"><div class="h" style="height:40px"></div><div class="ws" style="top:50px;bottom:12px"></div></div>
<div class="c" style="--a:1310;--b:1321"><div class="h" style="height:40px"></div><div class="ws" style="top:50px;bottom:12px"></div></div>
<div class="c" style="--a:1355;--b:1366"><div class="h" style="height:40px;background:#6a4e5c"></div><div class="w" style="top:44px;bottom:2px;--wc:#e0c8d4"></div></div>
</div>
<div class="r" style="top:1327px;height:72px;--hc:#6e6650;--wc:#d4ccb6">
<div class="c" style="--a:371;--b:390"><div class="h">➤</div><div class="ws" style="clip-path:polygon(100% 0,0 50%,100% 100%)"></div></div>
<div class="c" style="--a:459;--b:480"><div class="h">➤</div><div class="ws" style="clip-path:polygon(100% 0,0 50%,100% 100%)"></div></div>
<div class="c" style="--a:625;--b:646"><div class="h">➤</div><div class="ws" style="clip-path:polygon(100% 0,0 50%,100% 100%)"></div></div>
<div class="c" style="--a:814;--b:834"><div class="h">➤</div><div class="ws" style="clip-path:polygon(100% 0,0 50%,100% 100%)"></div></div>
<div class="c" style="--a:891;--b:911"><div class="h">➤</div><div class="ws" style="clip-path:polygon(100% 0,0 50%,100% 100%)"></div></div>
<div class="c" style="--a:1080;--b:1100"><div class="h">➤</div><div class="ws" style="clip-path:polygon(100% 0,0 50%,100% 100%)"></div></div>
<div class="c" style="--a:1157;--b:1178"><div class="h">➤</div><div class="ws" style="clip-path:polygon(100% 0,0 50%,100% 100%)"></div></div>
<div class="c" style="--a:1345;--b:1366"><div class="h">➤</div><div class="ws" style="clip-path:polygon(100% 0,0 50%,100% 100%)"></div></div>
<div class="c" style="--a:1522;--b:1542"><div class="h">➤</div><div class="ws" style="clip-path:polygon(100% 0,0 50%,100% 100%)"></div></div>
</div>
<div class="r" style="top:1399px;height:33px;--hc:#5b7663">
<div class="c" style="--a:390;--b:413"><div class="h" style="height:30px">➤</div></div>
<div class="c" style="--a:745;--b:768"><div class="h" style="height:30px">➤</div></div>
<div class="c" style="--a:834;--b:857"><div class="h" style="height:30px">➤</div></div>
<div class="c" style="--a:1011;--b:1034"><div class="h" style="height:30px">➤</div></div>
<div class="c" style="--a:1100;--b:1123"><div class="h" style="height:30px">➤</div></div>
<div class="c" style="--a:1277;--b:1300"><div class="h" style="height:30px">➤</div></div>
<div class="c" style="--a:1366;--b:1389"><div class="h" style="height:30px">➤</div></div>
<div class="c" style="--a:1454;--b:1477"><div class="h" style="height:30px">➤</div></div>
</div>
<div class="r" style="top:1432px;height:30px;border:none"><div class="auto" style="background:#5a4c7e;border-top:1px solid #7a6aa0;color:#ece6f6">☍ Endless Smile - CAT_DEALERS_CLAP_01 - Intensit</div></div>

</body></html>
